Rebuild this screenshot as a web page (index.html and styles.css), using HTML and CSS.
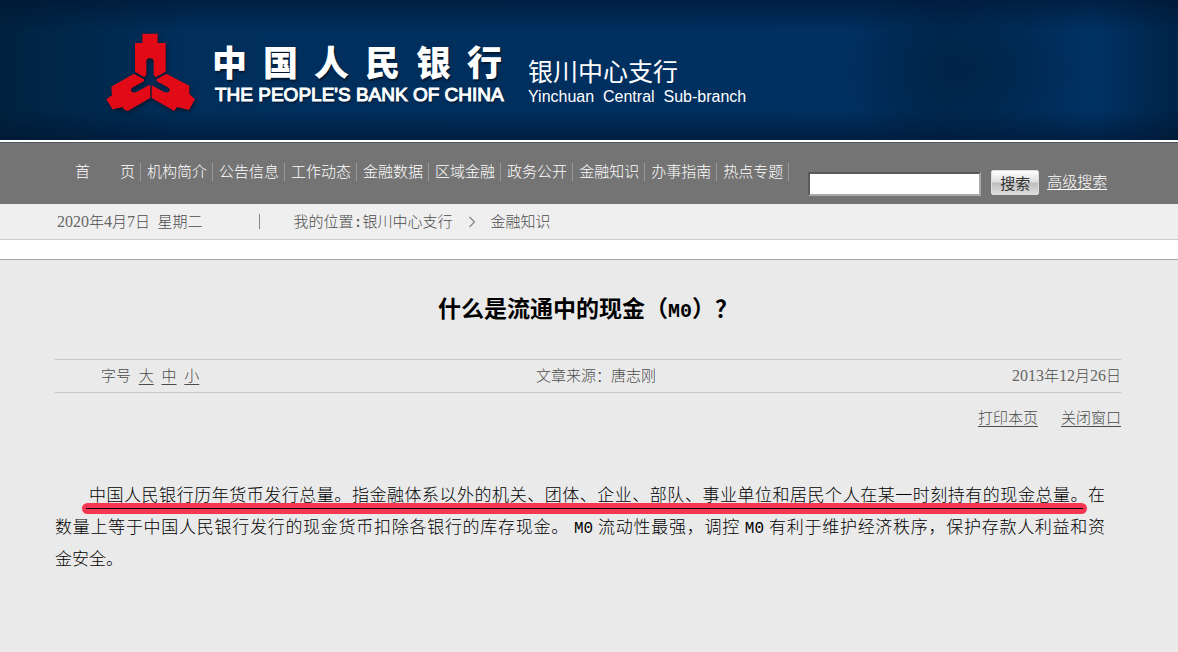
FILE: index.html
```
<!DOCTYPE html>
<html lang="zh-CN">
<head>
<meta charset="utf-8">
<title>什么是流通中的现金（M0）？</title>
<link rel="stylesheet" href="styles.css">
</head>
<body>
<header class="banner">
  <svg class="logo" viewBox="46 36 276 240" aria-hidden="true">
    <g fill="#e20a17">
      <path d="M158 41H204V69H228V155L198 172L192 164V124Q192 115 181 115Q170 115 170 124V164L164 172L136 155V69H158Z"/>
      <path d="M132 161L163 178V184L130 202Q121 208 125 214Q130 220 142 215L180 194L182 200V234L114 273L104 269L99 262L68 268L50 238L67 226L65 200Z"/>
      <path d="M230 161L201 178V184L234 202Q243 208 239 214Q234 220 222 215L186 196V234L254 273L262 261L298 270L316 238L299 222V197Z"/>
    </g>
  </svg>
  <div class="bank">
    <div class="bank-cn">中国人民银行</div>
    <div class="bank-en">THE PEOPLE'S BANK OF CHINA</div>
  </div>
  <div class="branch">
    <div class="branch-cn">银川中心支行</div>
    <div class="branch-en">Yinchuan&nbsp; Central&nbsp; Sub-branch</div>
  </div>
</header>
<div class="menu">
  <nav class="nav">
    <a class="home" href="#"><span>首</span><span>页</span></a>
    <a href="#">机构简介</a>
    <a href="#">公告信息</a>
    <a href="#">工作动态</a>
    <a href="#">金融数据</a>
    <a href="#">区域金融</a>
    <a href="#">政务公开</a>
    <a href="#">金融知识</a>
    <a href="#">办事指南</a>
    <a href="#">热点专题</a>
  </nav>
  <form class="search">
    <input class="search-box" type="text" aria-label="搜索">
    <button class="search-btn" type="button">搜索</button>
    <a href="#">高级搜索</a>
  </form>
</div>
<div class="crumbs">
  <span class="today"><span class="num">2020</span>年<span class="num">4</span>月<span class="num">7</span>日&nbsp; 星期二</span>
  <span class="bar"></span>
  <span>我的位置<span class="latin">:</span><a href="#">银川中心支行</a></span>
  <svg class="chevron" viewBox="0 0 8 12" aria-hidden="true"><path d="M1.500 1L6.500 6L1.500 11" fill="none" stroke="#888" stroke-width="1.300"/></svg>
  <a href="#">金融知识</a>
</div>
<main class="article">
  <h1>什么是流通中的现金（<span class="latin">M0</span>）？</h1>
  <div class="meta">
    <div class="sizes">字号 <a href="#">大</a> <a href="#">中</a> <a href="#">小</a></div>
    <div class="source">文章来源：唐志刚</div>
    <div class="date"><span class="num">2013</span>年<span class="num">12</span>月<span class="num">26</span>日</div>
  </div>
  <div class="tools"><a href="#">打印本页</a><a href="#">关闭窗口</a></div>
  <div class="body">
    <p>中国人民银行历年货币发行总量。指金融体系以外的机关、团体、企业、部队、事业单位和居民个人在某一时刻持有的现金总量。在<span class="word">数量</span>上等于中国人民银行发行的现金货币扣除各银行的库存现金。 <span class="latin">M0</span> 流动性最强，调控 <span class="latin">M0</span> 有利于维护经济秩序，保护存款人利益和资<span class="word">金安全</span>。</p>
    <span class="marker"></span>
  </div>
</main>
</body>
</html>
```
FILE: styles.css
```
body {
  margin: 0;
  min-height: 100vh;
  background: #eaeaea;
  color: #4c4c4c;
  font: 15px/20px "Liberation Serif", "Noto Sans CJK SC", serif;
  font-weight: 300;
  text-spacing-trim: space-all;
}
a { color: inherit; }
.num { font-size: 16px; line-height: 1; color: #666; }
.latin { font-family: "Liberation Mono", monospace; line-height: 1; }

.banner {
  display: flex;
  box-sizing: border-box;
  height: 142px;
  padding-left: 105px;
  border-bottom: 2px solid #fff;
  color: #fff;
  background:
    radial-gradient(ellipse 130px 90px at 965px 70px, rgba(0, 30, 60, .55), transparent),
    linear-gradient(180deg, rgba(0, 22, 50, .65), transparent 22%, transparent 78%, rgba(0, 22, 50, .65)),
    linear-gradient(90deg, #00223f, #002f5c 16%, #003061 72%, #002a54 80%, #003264 93%, #002346);
}
.logo { width: 92px; height: 80px; margin-top: 32px; filter: drop-shadow(1px 2px 2px rgba(0, 0, 0, .5)); }
.bank { width: 290px; margin: 40px 0 0 15px; text-shadow: 1px 2px 2px rgba(0, 0, 0, .5); }
.bank-cn {
  font: 900 35px/42px "Noto Sans CJK SC", sans-serif;
  text-align-last: justify;
}
.bank-en { padding: 2px 0 0 3px; font: 19px/22px "Liberation Sans", sans-serif; -webkit-text-stroke: 1px #fff; white-space: nowrap; }
.branch { margin: 57px 0 0 26px; font-family: "Liberation Sans", "Noto Sans CJK SC", sans-serif; font-weight: 400; }
.branch-cn { font-size: 25px; line-height: 31px; }
.branch-en { font-size: 16px; line-height: 18px; white-space: nowrap; }

.menu {
  display: flex;
  box-sizing: border-box;
  height: 62px;
  padding-left: 75px;
  background: #747474;
  border-top: 1px solid #525a66;
  color: #fff;
  white-space: nowrap;
}
.nav { display: flex; margin-top: 20px; }
.nav a {
  height: 18px;
  padding: 0 5px 0 6px;
  border-right: 1px solid #999;
  line-height: 18px;
  text-decoration: none;
}
.nav .home { display: flex; gap: 30px; padding-left: 0; }
.search { display: flex; align-items: flex-end; margin: 26px 0 0 19px; height: 27px; }
.search-box {
  box-sizing: border-box;
  width: 173px;
  height: 24px;
  margin: 0;
  padding: 0 4px;
  border: 2px solid;
  border-color: #5a5a5a #aaa #aaa #5a5a5a;
  background: #fff;
}
.search-btn {
  width: 48px;
  height: 25px;
  margin: 0 8px 1px 10px;
  padding: 0;
  border: 1px solid #ddd;
  border-radius: 2px;
  background: linear-gradient(#fff, #ddd 48%, #bdbdbd 52%, #ddd);
  color: #333;
  font: 15px/22px "Noto Sans CJK SC", sans-serif;
}
.search a { line-height: 20px; margin-bottom: 4px; text-underline-offset: 2px; }

.crumbs {
  display: flex;
  align-items: center;
  height: 35px;
  padding-left: 57px;
  background: #efefef;
  border-bottom: 1px solid #ccc;
}
.crumbs a { text-decoration: none; }
.bar { width: 1px; height: 15px; margin: 0 34px 0 56px; background: #888; }
.chevron { width: 8px; height: 12px; margin: 0 15px; }

.article { padding: 0 57px 60px 55px; border-top: 1px solid #a4a6aa; box-shadow: 0 -19px #fff; margin-top: 19px; }
h1 {
  margin: 31px 0 35px;
  color: #000;
  font: 700 23px/33px "Noto Sans CJK SC", sans-serif;
  text-align: center;
}
h1 .latin { font-size: 20px; }
.meta {
  display: grid;
  grid-template-columns: 1fr auto 1fr;
  height: 32px;
  padding-left: 16px;
  border: 1px solid #c8c8c8;
  border-width: 1px 0;
  line-height: 32px;
}
.sizes { padding-left: 30px; word-spacing: 4px; }
.sizes a, .tools a { text-underline-offset: 3px; }
.date { text-align: right; }
.tools { display: flex; justify-content: flex-end; gap: 23px; margin-top: 15px; }
.body { position: relative; margin-top: 52px; padding-right: 16px; }
.body p {
  margin: 0;
  color: #000;
  font-size: 17px;
  line-height: 32px;
  text-align: justify;
  text-indent: 2em;
}
.body .latin { font-size: 16px; }
.word { white-space: nowrap; }
.marker {
  position: absolute;
  top: 23px;
  left: 27px;
  right: 34px;
  height: 11px;
  border-radius: 6px;
  background: linear-gradient(#000, #000) center / calc(100% - 8px) 1px no-repeat #f73752;
}
```
